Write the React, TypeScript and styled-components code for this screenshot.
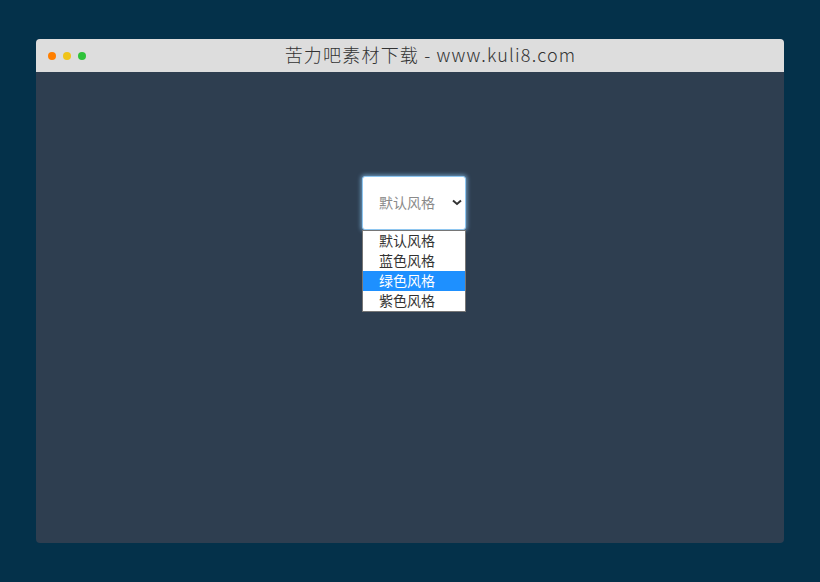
import React from "react";
import styled, { createGlobalStyle } from "styled-components";

const Global = createGlobalStyle`
  html, body { margin: 0; padding: 0; background: #04314a; }
  body { font-family: "Noto Sans CJK SC", "Noto Sans", sans-serif; }
  * { box-sizing: border-box; }
`;

const Page = styled.div`
  width: 820px;
  height: 582px;
  padding: 39px 36px 39px 36px;
  display: flex;
`;

const Window = styled.div`
  flex: 1;
  display: flex;
  flex-direction: column;
  border-radius: 4px;
  overflow: hidden;
  background: #2e3e50;
`;

const TitleBar = styled.div`
  height: 33px;
  background: #dddddd;
  display: flex;
  align-items: center;
  position: relative;
  padding-left: 12px;
  gap: 7px;
`;

const Dot = styled.span<{ $c: string }>`
  width: 8px;
  height: 8px;
  border-radius: 50%;
  background: ${(p) => p.$c};
`;

const Title = styled.div`
  position: absolute;
  left: 0;
  right: 0;
  top: 0;
  bottom: 0;
  display: flex;
  align-items: center;
  justify-content: center;
  font-size: 18px;
  color: #333;
  font-weight: 300;
  letter-spacing: 1.2px;
  padding-left: 41px;
  padding-bottom: 3px;
`;

const Body = styled.div`
  flex: 1;
  display: flex;
  justify-content: center;
  padding-top: 104px;
  padding-left: 8px;
`;

const SelectWrap = styled.div`
  position: relative;
  width: 104px;
  height: 54px;
`;

const SelectBox = styled.div`
  width: 100%;
  height: 100%;
  background: #fff;
  border: 1px solid #8ec6f0;
  border-radius: 3px;
  box-shadow: 0 0 4px 1px rgba(140, 200, 245, 0.7);
  display: flex;
  align-items: center;
  padding: 0 3px 3px 16px;
  justify-content: space-between;
  font-size: 14px;
  color: #8a8a8a;
`;

const Chevron = styled.svg`
  width: 10px;
  height: 7px;
  margin-top: 2px;
`;

const List = styled.ul`
  position: absolute;
  top: 54px;
  left: 0;
  width: 104px;
  margin: 0;
  padding: 0;
  list-style: none;
  background: #fff;
  border: 1px solid #767676;
`;

const Item = styled.li<{ $active?: boolean }>`
  height: 20px;
  line-height: 18px;
  font-size: 14px;
  padding-left: 16px;
  color: ${(p) => (p.$active ? "#fff" : "#333")};
  background: ${(p) => (p.$active ? "#1e90ff" : "#fff")};
`;

const options = ["默认风格", "蓝色风格", "绿色风格", "紫色风格"];

export default function App() {
  return (
    <>
      <Global />
      <Page>
        <Window>
          <TitleBar>
            <Dot $c="#ff7f00" />
            <Dot $c="#f0c419" />
            <Dot $c="#2ec23a" />
            <Title>苦力吧素材下载 - www.kuli8.com</Title>
          </TitleBar>
          <Body>
            <SelectWrap>
              <SelectBox>
                <span>默认风格</span>
                <Chevron viewBox="0 0 10 7">
                  <path d="M1 1.5 L5 5 L9 1.5" fill="none" stroke="#333" strokeWidth="2" />
                </Chevron>
              </SelectBox>
              <List>
                {options.map((o, i) => (
                  <Item key={o} $active={i === 2}>{o}</Item>
                ))}
              </List>
            </SelectWrap>
          </Body>
        </Window>
      </Page>
    </>
  );
}
